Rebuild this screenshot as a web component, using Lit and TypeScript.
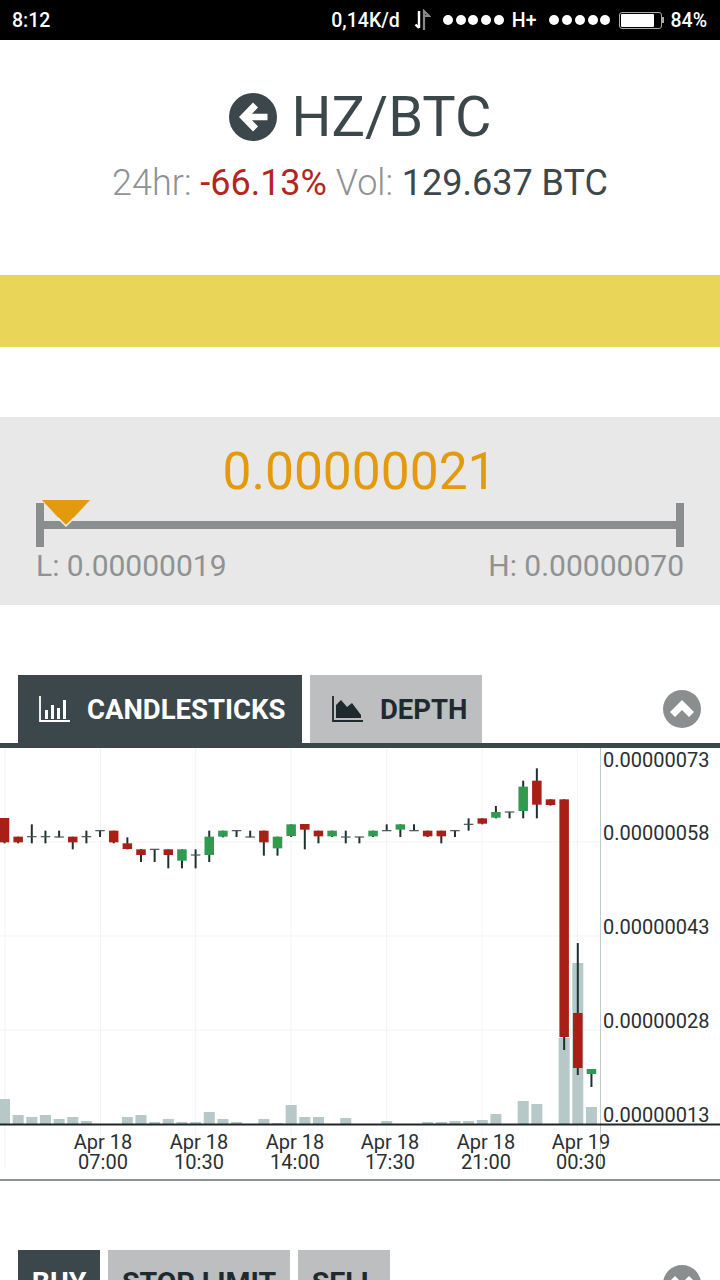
import { LitElement, html, css, svg } from "lit";
import { customElement } from "lit/decorators.js";

type C = [string, number, number, number, number];
// kind (r/g/d), body top, body bottom, wick top, wick bottom, in 3x offsets from y=760
const CANDLES: C[] = [
  ["r",174,247,174,250],["r",230,247,230,250],["d",230,230,193,250],["d",230,230,212,250],
  ["d",231,231,212,232],["r",230,247,230,268],["d",230,230,212,250],["d",212,212,212,231],
  ["r",212,247,212,250],["r",250,267,232,268],["r",268,285,268,306],["d",268,268,268,306],
  ["r",268,285,268,325],["g",268,302,268,325],["d",285,285,268,325],["g",230,285,212,306],
  ["g",212,230,212,232],["d",212,212,212,231],["d",231,231,212,232],["r",212,247,212,287],
  ["g",230,265,230,287],["g",193,228,193,231],["r",192,209,192,268],["r",212,229,212,250],
  ["g",212,229,212,231],["d",231,231,212,250],["d",231,231,231,250],["g",212,229,212,231],
  ["d",212,212,193,213],["g",193,209,193,231],["d",212,212,193,213],["r",212,229,212,231],
  ["r",212,229,212,250],["d",212,212,212,231],["d",193,193,175,212],["r",175,191,175,193],
  ["g",156,173,138,175],["d",156,156,156,175],["g",80,153,62,175],["r",62,134,25,175],
  ["r",118,135,118,137],["r",118,831,118,870],["r",759,924,549,945],["g",927,942,927,981],
];
// bar top y by candle index
const VOLS: Record<number, number> = {
  0:1099,1:1115,2:1117,3:1115,4:1119,5:1117,6:1121,9:1117,10:1115,11:1122,12:1119,13:1122,14:1122,
  15:1112,16:1119,17:1122,19:1119,20:1123,21:1105,22:1117,23:1117,25:1118,28:1121,31:1122,32:1122,
  33:1121,34:1121,35:1120,36:1114,38:1101,39:1104,41:1038,42:963,43:1107,
};
const X = (i: number) => 4.5 + i * 13.65;
const Y0 = 748;
const Yz = (z: number) => 760 + z / 3 - Y0;
const COL: Record<string, string> = { r: "#a81f17", g: "#2f9a50" };
const PRICES: [string, number][] = [["0.00000073",760],["0.00000058",833],["0.00000043",927],["0.00000028",1021],["0.00000013",1115]];
const DATES: [string, string, number][] = [["Apr 18","07:00",103],["Apr 18","10:30",199],["Apr 18","14:00",295],["Apr 18","17:30",390],["Apr 18","21:00",486],["Apr 19","00:30",581]];

@customElement("app-root")
export class AppRoot extends LitElement {
  static styles = css`
    :host { display: block; width: 720px; height: 1280px; overflow: hidden; background: #fff; font-family: Roboto, "Liberation Sans", sans-serif; }
    .status { height: 40px; background: #000; color: #fff; display: flex; align-items: center; padding: 0 13px 0 12px; font-size: 19.5px; font-weight: 500; }
    .status .time { flex: 1; }
    .status .group { display: flex; align-items: center; }
    .dots { display: flex; gap: 2.75px; }
    .dots i { width: 10px; height: 10px; border-radius: 50%; background: #fff; }
    .hplus { margin: 0 13px 0 8px; }
    .updown { margin: 0 12px 0 13px; }
    .batt { width: 43px; height: 17px; border: 1.5px solid #aaa; border-radius: 3px; box-sizing: border-box; padding: 1px; margin-left: 9px; position: relative; }
    .batt b { display: block; width: 84%; height: 100%; background: #fff; border-radius: 1px; }
    .nub { width: 2px; height: 6px; background: #aaa; margin-right: 6px; }
    .head { height: 235px; box-sizing: border-box; padding-top: 44px; text-align: center; }
    .title { display: flex; justify-content: center; align-items: center; gap: 15px; height: 66px; font-size: 56px; color: #3c474c; line-height: 66px; }
    .sub { font-size: 36px; line-height: 40px; margin-top: 13px; color: #8e9293; font-weight: 300; }
    .sub .neg { color: #b3261e; font-weight: 400; }
    .sub .val { color: #3c474c; font-weight: 400; }
    .band { height: 72px; background: #e9d558; }
    .panel { margin-top: 70px; height: 188px; background: #e8e8e8; box-sizing: border-box; padding: 25px 36px 0; }
    .price { font-size: 51.5px; line-height: 60px; color: #e39a0d; text-align: center; padding-right: 1px; }
    .slider { position: relative; height: 44px; margin-top: 1px; display: flex; align-items: center; }
    .tick { width: 8px; height: 44px; background: #8a8e8f; flex: none; }
    .track { flex: 1; height: 8px; background: #8a8e8f; }
    .marker { position: absolute; left: 4px; top: -4px; }
    .range { display: flex; justify-content: space-between; font-size: 30px; line-height: 36px; color: #8e9293; margin-top: 1px; }
    .tabs { display: flex; align-items: flex-start; gap: 8px; padding: 0 18px; position: relative; margin-top: 70px; height: 68px; border-bottom: 5px solid #3c474c; }
    .tab { height: 68px; box-sizing: border-box; display: flex; align-items: center; background: #bcbebf; color: #1f2a2e; font-size: 27.5px; font-weight: 700; }
    .tab.on { background: #3c474c; color: #fff; height: 73px; padding-bottom: 5px; }
    .tab.candles { width: 284px; padding-left: 21px; gap: 16px; }
    .tab.depth { width: 172px; padding-left: 22px; gap: 16px; }
    .fold { position: absolute; right: 19px; top: 15px; }
    .chart { display: block; width: 720px; height: 433px; }
    .chart text { font-family: Roboto, "Liberation Sans", sans-serif; font-size: 20px; fill: #2a2f31; }
    .orders { margin-top: 69px; position: relative; height: 80px; }
    .orders .tabs { margin-top: 0; border: 0; }
    .orders .tab { height: 68px; align-items: flex-start; padding-top: 16px; justify-content: center; font-size: 28.5px; }
    .buy { width: 82px; }
    .stop { width: 182px; }
    .sell { width: 92px; }
  `;

  private chart() {
    return svg`
      ${[5, 100.5, 195.7, 291, 386.7, 482, 577.3].map(x => svg`<line x1=${x} x2=${x} y1="0" y2="420" stroke="#f1f3f3" />`)}
      ${[842, 936, 1030].map(y => svg`<line x1="0" x2="600" y1=${y - Y0} y2=${y - Y0} stroke="#f1f3f3" />`)}
      <line x1="600.5" x2="600.5" y1="0" y2="420" stroke="#c3cccc" />
      ${Object.entries(VOLS).map(([i, t]) => svg`<rect x=${X(+i) - 5.5} y=${t - Y0} width="11" height=${1124 - t} fill="#b6c8c8" />`)}
      ${CANDLES.map(([k, a, b, c, d], i) => {
        const x = X(i);
        return svg`
          <line x1=${x} x2=${x} y1=${Yz(c)} y2=${Yz(d)} stroke="#1f3030" stroke-width="2" />
          ${k === "d"
            ? svg`<rect x=${x - 4.75} y=${Yz(a) - 0.6} width="9.5" height="1.2" fill="#4a5555" />`
            : svg`<rect x=${x - 4.75} y=${Yz(a)} width="9.5" height=${(b - a) / 3} fill=${COL[k]} />`}
        `;
      })}
      <line x1="0" x2="720" y1=${1124.5 - Y0} y2=${1124.5 - Y0} stroke="#1f2628" stroke-width="2" />
      ${PRICES.map(([t, y]) => svg`<text x="603" y=${y - Y0 + 7}>${t}</text>`)}
      ${DATES.map(([a, b, x]) => svg`
        <text x=${x} y=${1149 - Y0} text-anchor="middle">${a}</text>
        <text x=${x} y=${1169 - Y0} text-anchor="middle">${b}</text>`)}
      <rect x="0" y=${1179 - Y0} width="720" height="2" fill="#8f9394" />
    `;
  }

  render() {
    const dots = html`<span class="dots"><i></i><i></i><i></i><i></i><i></i></span>`;
    return html`
      <div class="status">
        <span class="time">8:12</span>
        <div class="group">
          <span>0,14K/d</span>
          <svg class="updown" width="18" height="22" viewBox="0 0 18 22">
            <path d="M6 2v17M2.500 15.500 6 19" stroke="#fff" stroke-width="2.4" fill="none" />
            <path d="M11 21V2l5 5h-4" stroke="#888" stroke-width="2.2" fill="none" />
          </svg>
          ${dots}
          <span class="hplus">H+</span>
          ${dots}
          <span class="batt"><b></b></span><span class="nub"></span>
          <span>84%</span>
        </div>
      </div>
      <div class="head">
        <div class="title">
          <svg width="48" height="48" viewBox="0 0 48 48">
            <circle cx="24" cy="24" r="24" fill="#3c474c" />
            <path d="M24 9.500 10 24l14 14.500 5-5-6-6.200h15.500v-6.600H23l6-6.200z" fill="#fff" />
          </svg>
          <span>HZ/BTC</span>
        </div>
        <div class="sub">24hr: <span class="neg">-66.13%</span> Vol: <span class="val">129.637 BTC</span></div>
      </div>
      <div class="band"></div>
      <div class="panel">
        <div class="price">0.00000021</div>
        <div class="slider">
          <div class="tick"></div><div class="track"></div><div class="tick"></div>
          <svg class="marker" width="52" height="30" viewBox="0 0 52 30">
            <path d="M26 27 2 1h48z" fill="#e39a0d" />
            <path d="M18 19l8 8 8-8" fill="none" stroke="#f4f4f4" stroke-width="1.5" />
          </svg>
        </div>
        <div class="range"><span>L: 0.00000019</span><span>H: 0.00000070</span></div>
      </div>
      <div class="tabs">
        <div class="tab on candles">
          <svg width="32" height="28" viewBox="0 0 32 28" fill="#fff">
            <path d="M1 1v25h30" fill="none" stroke="#fff" stroke-width="1.8" />
            <rect x="6" y="15" width="3" height="9" /><rect x="12" y="10" width="3" height="14" />
            <rect x="18" y="13" width="3" height="11" /><rect x="24" y="5" width="3" height="19" />
          </svg>
          <span>CANDLESTICKS</span>
        </div>
        <div class="tab depth">
          <svg width="32" height="28" viewBox="0 0 32 28" fill="#1f2a2e">
            <path d="M1 1v25h30" fill="none" stroke="#1f2a2e" stroke-width="1.8" />
            <path d="M4 23V10l5-5 6 7 5-4 9 12v3z" />
          </svg>
          <span>DEPTH</span>
        </div>
        <svg class="fold" width="38" height="38" viewBox="0 0 38 38">
          <circle cx="19" cy="19" r="19" fill="#8a8e8f" />
          <path d="M7 22 19 10l12 12-5 5-7-7-7 7z" fill="#fff" />
        </svg>
      </div>
      <svg class="chart" viewBox="0 0 720 433">${this.chart()}</svg>
      <div class="orders">
        <div class="tabs">
          <div class="tab on buy">BUY</div>
          <div class="tab stop">STOP LIMIT</div>
          <div class="tab sell">SELL</div>
          <svg class="fold" width="38" height="38" viewBox="0 0 38 38">
            <circle cx="19" cy="19" r="19" fill="#8a8e8f" />
            <path d="M7 16 19 28l12-12-5-5-7 7-7-7z" fill="#fff" />
          </svg>
        </div>
      </div>
    `;
  }
}
